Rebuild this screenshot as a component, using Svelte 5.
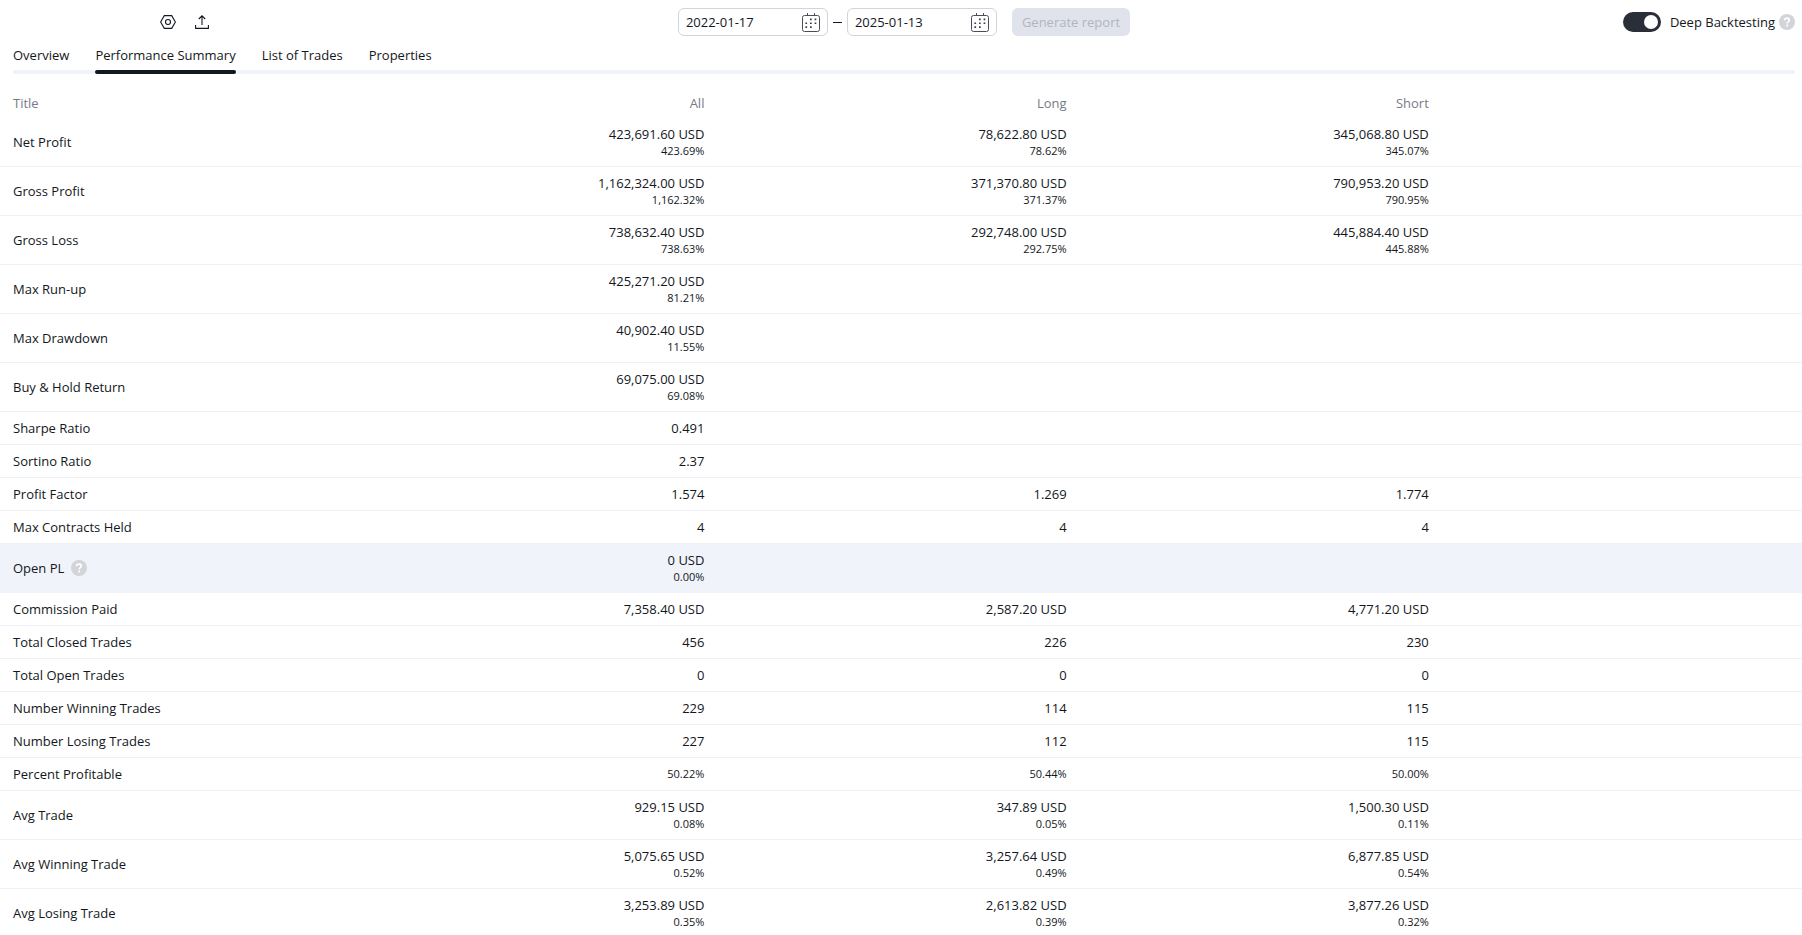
<script>
  const tabs = ['Overview', 'Performance Summary', 'List of Trades', 'Properties'];
  let active = $state('Performance Summary');
  let from = $state('2022-01-17');
  let to = $state('2025-01-13');
  let deep = $state(true);

  const rows = [
    { title: 'Net Profit', cells: [['423,691.60 USD', '423.69%'], ['78,622.80 USD', '78.62%'], ['345,068.80 USD', '345.07%']] },
    { title: 'Gross Profit', cells: [['1,162,324.00 USD', '1,162.32%'], ['371,370.80 USD', '371.37%'], ['790,953.20 USD', '790.95%']] },
    { title: 'Gross Loss', cells: [['738,632.40 USD', '738.63%'], ['292,748.00 USD', '292.75%'], ['445,884.40 USD', '445.88%']] },
    { title: 'Max Run-up', cells: [['425,271.20 USD', '81.21%'], [], []] },
    { title: 'Max Drawdown', cells: [['40,902.40 USD', '11.55%'], [], []] },
    { title: 'Buy & Hold Return', cells: [['69,075.00 USD', '69.08%'], [], []] },
    { title: 'Sharpe Ratio', cells: [['0.491'], [], []] },
    { title: 'Sortino Ratio', cells: [['2.37'], [], []] },
    { title: 'Profit Factor', cells: [['1.574'], ['1.269'], ['1.774']] },
    { title: 'Max Contracts Held', cells: [['4'], ['4'], ['4']] },
    { title: 'Open PL', hint: true, cells: [['0 USD', '0.00%'], [], []] },
    { title: 'Commission Paid', cells: [['7,358.40 USD'], ['2,587.20 USD'], ['4,771.20 USD']] },
    { title: 'Total Closed Trades', cells: [['456'], ['226'], ['230']] },
    { title: 'Total Open Trades', cells: [['0'], ['0'], ['0']] },
    { title: 'Number Winning Trades', cells: [['229'], ['114'], ['115']] },
    { title: 'Number Losing Trades', cells: [['227'], ['112'], ['115']] },
    { title: 'Percent Profitable', cells: [['', '50.22%'], ['', '50.44%'], ['', '50.00%']] },
    { title: 'Avg Trade', cells: [['929.15 USD', '0.08%'], ['347.89 USD', '0.05%'], ['1,500.30 USD', '0.11%']] },
    { title: 'Avg Winning Trade', cells: [['5,075.65 USD', '0.52%'], ['3,257.64 USD', '0.49%'], ['6,877.85 USD', '0.54%']] },
    { title: 'Avg Losing Trade', cells: [['3,253.89 USD', '0.35%'], ['2,613.82 USD', '0.39%'], ['3,877.26 USD', '0.32%']] }
  ];
</script>

{#snippet calendar()}
  <svg width="18" height="19" viewBox="0 0 18 19" fill="none" stroke="#4a4d57">
    <rect x="0.5" y="2.5" width="17" height="16" rx="2" />
    <path d="M5.5 0v3M12.5 0v3" />
    <path stroke="none" fill="#3a3d47" d="M8 5.5h1.7v1.7H8zM12.6 5.5h1.7v1.7h-1.7zM3.4 9.4h1.7v1.7H3.4zM8 9.4h1.7v1.7H8zM12.6 9.4h1.7v1.7h-1.7zM3.4 13.3h1.7V15H3.4zM8 13.3h1.7V15H8z" />
  </svg>
{/snippet}

{#snippet help()}
  <button class="help" aria-label="Help">
    <svg width="16" height="16" viewBox="0 0 16 16" fill="none">
      <circle cx="8" cy="8" r="8" fill="#d3d4d9" />
      <path d="M5.6 6.3C5.6 4.8 6.6 4.1 8 4.1s2.3.8 2.3 2c0 1.6-2.1 1.6-2.1 3.3" stroke="#fff" stroke-width="1.7" />
      <rect x="7.2" y="10.6" width="1.9" height="1.8" fill="#fff" />
    </svg>
  </button>
{/snippet}

<div class="page">
  <header class="toolbar">
    <div class="actions">
      <button class="icon" aria-label="Settings">
        <svg width="16" height="14" viewBox="0 0 16 14" fill="none" stroke="#131722" stroke-width="1.1">
          <path d="M4.3.6h7.4L15.4 7l-3.7 6.4H4.3L.6 7z" />
          <circle cx="8" cy="7" r="2.5" />
        </svg>
      </button>
      <button class="icon" aria-label="Export">
        <svg width="14" height="14" viewBox="0 0 14 14" fill="none" stroke="#131722" stroke-width="1.1">
          <path d="M7 10V1M3.8 4L7 .8 10.2 4M.6 10v3.4h12.8V10" />
        </svg>
      </button>
    </div>

    <div class="range">
      <span class="date">
        <input type="text" aria-label="Start date" bind:value={from} />
        <button aria-label="Choose start date">{@render calendar()}</button>
      </span>
      <span class="dash"></span>
      <span class="date">
        <input type="text" aria-label="End date" bind:value={to} />
        <button aria-label="Choose end date">{@render calendar()}</button>
      </span>
      <button class="generate" disabled>Generate report</button>
    </div>

    <div class="mode">
      <label>
        <input type="checkbox" role="switch" bind:checked={deep} />
        Deep Backtesting
      </label>
      {@render help()}
    </div>
  </header>

  <nav class="tabs">
    {#each tabs as tab}
      <button class:active={tab === active} onclick={() => (active = tab)}>{tab}</button>
    {/each}
  </nav>

  <main>
    <table>
      <colgroup>
        <col />
        <col class="num" />
        <col class="num" />
        <col class="num" />
        <col class="num" />
      </colgroup>
      <thead>
        <tr>
          <th>Title</th>
          <th>All</th>
          <th>Long</th>
          <th>Short</th>
          <td></td>
        </tr>
      </thead>
      <tbody>
        {#each rows as row}
          <tr class:marked={row.hint}>
            <th scope="row">
              <span class="title">{row.title}{#if row.hint}{@render help()}{/if}</span>
            </th>
            {#each row.cells as [value, percent]}
              <td>
                {#if value}<div>{value}</div>{/if}
                {#if percent}<div class="percent" class:alone={!value}>{percent}</div>{/if}
              </td>
            {/each}
            <td></td>
          </tr>
        {/each}
      </tbody>
    </table>
  </main>
</div>

<style>
  :global(body) {
    background: #fff;
  }

  .page {
    display: flex;
    flex-direction: column;
    height: 100vh;
    font: 13px/18px 'Trebuchet MS', 'Open Sans', sans-serif;
    color: #131722;
  }

  button,
  input {
    font: inherit;
    color: inherit;
    margin: 0;
    padding: 0;
    border: 0;
    background: none;
  }

  svg {
    display: block;
  }

  .toolbar {
    display: grid;
    grid-template-columns: 1fr auto 1fr;
    align-items: center;
    padding: 8px 7px 0 13px;
  }

  .actions {
    display: flex;
    gap: 6px;
    padding-left: 141px;
  }

  .icon {
    display: grid;
    place-items: center;
    width: 28px;
    height: 28px;
  }

  .range {
    display: flex;
    align-items: center;
  }

  .date {
    display: flex;
    align-items: center;
    box-sizing: border-box;
    width: 150px;
    height: 28px;
    padding: 0 7px;
    border: 1px solid #d1d4dc;
    border-radius: 6px;
  }

  .date input {
    flex: 1;
    min-width: 0;
    outline: none;
  }

  .dash {
    width: 9px;
    height: 1px;
    margin: 0 5px;
    background: #131722;
  }

  .generate {
    height: 28px;
    margin-left: 15px;
    padding: 0 10px;
    border-radius: 6px;
    background: #e0e3eb;
    color: #b2b5be;
  }

  .mode {
    display: flex;
    align-items: center;
    justify-content: flex-end;
    gap: 4px;
  }

  .mode label {
    display: flex;
    align-items: center;
    gap: 9px;
  }

  .mode input {
    appearance: none;
    box-sizing: border-box;
    width: 38px;
    height: 20px;
    padding: 3px;
    border-radius: 10px;
    background: #b2b5be;
  }

  .mode input::before {
    content: '';
    display: block;
    width: 14px;
    height: 14px;
    border-radius: 50%;
    background: #fff;
  }

  .mode input:checked {
    background: #2a2e39;
  }

  .mode input:checked::before {
    margin-left: auto;
  }

  .tabs {
    display: flex;
    gap: 26px;
    margin: 10px 7px 0 13px;
    background: linear-gradient(#f0f3fa, #f0f3fa) bottom / 100% 4px no-repeat;
  }

  .tabs button {
    display: flex;
    flex-direction: column;
  }

  .tabs button::after {
    content: '';
    width: 100%;
    height: 4px;
    margin-top: 6px;
    border-radius: 2px;
  }

  .tabs .active::after {
    background: #131722;
  }

  main {
    flex: 1;
    min-height: 0;
    overflow-y: auto;
    scrollbar-width: none;
  }

  table {
    width: 100%;
    table-layout: fixed;
    border-collapse: separate;
    border-spacing: 0;
  }

  .num {
    width: 20.1%;
  }

  th,
  td {
    padding: 7px 11px 7px 13px;
    text-align: right;
    font-weight: normal;
    vertical-align: middle;
  }

  th:first-child {
    text-align: left;
  }

  thead th {
    padding-top: 20px;
    padding-bottom: 6px;
    color: #787b86;
  }

  tbody th,
  tbody td {
    border-bottom: 1px solid #f0f1f4;
  }

  .marked th,
  .marked td {
    background: #f0f3fa;
    border-color: #f0f3fa;
  }

  .title {
    display: flex;
    align-items: center;
    gap: 7px;
  }

  .percent {
    font-size: 11px;
    line-height: 16px;
  }

  .alone {
    line-height: 18px;
  }
</style>
